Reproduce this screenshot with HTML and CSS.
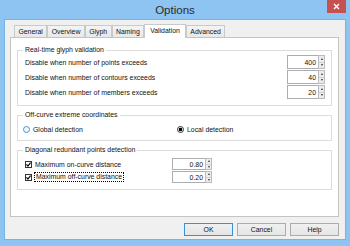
FILE: index.html
```html
<!DOCTYPE html>
<html lang="en">
<head>
  <meta charset="UTF-8">
  <title>Options</title>
  <link rel="stylesheet" href="styles.css">
</head>
<body>
  <div class="window">
    <div class="titlebar">
      <span></span>
      <div class="title">Options</div>
      <div class="close">
        <svg width="7" height="7" viewBox="0 0 7 7"><path d="M1 1L6 6M6 1L1 6" stroke="#fff" stroke-width="1.4"/></svg>
      </div>
    </div>

    <div class="client">
      <div class="tabs">
        <div class="tab">General</div>
        <div class="tab">Overview</div>
        <div class="tab">Glyph</div>
        <div class="tab">Naming</div>
        <div class="tab active">Validation</div>
        <div class="tab">Advanced</div>
      </div>

      <div class="panel">
        <fieldset class="group g-limits">
          <legend>Real-time glyph validation</legend>
          <div class="rows">
            <div class="row">
              <span>Disable when number of points exceeds</span>
              <div class="spin"><div class="spin-field">400</div><div class="spin-arrows"><span class="up"></span><span class="down"></span></div></div>
            </div>
            <div class="row">
              <span>Disable when number of contours exceeds</span>
              <div class="spin"><div class="spin-field">40</div><div class="spin-arrows"><span class="up"></span><span class="down"></span></div></div>
            </div>
            <div class="row">
              <span>Disable when number of members exceeds</span>
              <div class="spin"><div class="spin-field">20</div><div class="spin-arrows"><span class="up"></span><span class="down"></span></div></div>
            </div>
          </div>
        </fieldset>

        <fieldset class="group g-extreme">
          <legend>Off-curve extreme coordinates</legend>
          <div class="radios">
            <label class="radio"><span class="radio-dot hover"></span>Global detection</label>
            <label class="radio"><span class="radio-dot checked"></span>Local detection</label>
          </div>
        </fieldset>

        <fieldset class="group g-diagonal">
          <legend>Diagonal redundant points detection</legend>
          <div class="checks">
            <label class="check-row">
              <span class="check"><svg width="5" height="5" viewBox="0 0 5 5"><path d="M0.4 2.4L1.9 4L4.6 0.6" fill="none" stroke="#000" stroke-width="1.2"/></svg></span>
              <span>Maximum on-curve distance</span>
            </label>
            <div class="spin"><div class="spin-field">0.80</div><div class="spin-arrows"><span class="up"></span><span class="down"></span></div></div>
            <label class="check-row">
              <span class="check"><svg width="5" height="5" viewBox="0 0 5 5"><path d="M0.4 2.4L1.9 4L4.6 0.6" fill="none" stroke="#000" stroke-width="1.2"/></svg></span>
              <span class="focus">Maximum off-curve distance</span>
            </label>
            <div class="spin"><div class="spin-field">0.20</div><div class="spin-arrows"><span class="up"></span><span class="down"></span></div></div>
          </div>
        </fieldset>
      </div>

      <div class="buttons">
        <button class="btn default">OK</button>
        <button class="btn">Cancel</button>
        <button class="btn">Help</button>
      </div>
    </div>
  </div>
</body>
</html>
```

FILE: styles.css
```css
html, body {
  margin: 0;
  padding: 0;
}
body {
  font-family: 'Liberation Sans', Arial, sans-serif;
  font-size: 6.9px;
  color: #111;
}

/* Рамка окна */
.window {
  width: 350px;
  height: 246px;
  box-sizing: border-box;
  padding: 0 4px 6px 4px;
  background: #8ec4f2;
  display: flex;
  flex-direction: column;
}
.titlebar {
  height: 19px;
  display: grid;
  grid-template-columns: 1fr auto 1fr;
  align-items: start;
  flex: none;
}
.title {
  font-size: 11.5px;
  line-height: 20px;
  color: #2b2b2b;
}
.close {
  justify-self: end;
  width: 19px;
  height: 13px;
  background: #c75050;
  display: flex;
  align-items: center;
  justify-content: center;
}
.close svg {
  display: block;
}

.client {
  flex: 1;
  min-height: 0;
  background: #f0f0f0;
  border: 1px solid #7ab3e3;
  padding: 4px 6px 3px 5px;
  display: flex;
  flex-direction: column;
}

/* Вкладки */
.tabs {
  display: flex;
  align-items: flex-end;
  height: 13px;
  padding-left: 4px;
  flex: none;
}
.tab {
  box-sizing: border-box;
  height: 12px;
  line-height: 11px;
  padding: 0 3.4px;
  border: 1px solid #c9c9c9;
  border-bottom: 0;
  background: linear-gradient(#f4f4f4, #e8e8e8);
  white-space: nowrap;
}
.tab.active {
  height: 14px;
  line-height: 12px;
  margin-bottom: -1px;
  padding: 0 5px;
  background: #fff;
  position: relative;
  z-index: 1;
}

.panel {
  flex: 1;
  min-height: 0;
  background: #fff;
  border: 1px solid #c4c4c4;
  padding: 7px 6px 0 6px;
}

/* Группы */
.group {
  margin: 0;
  min-width: 0;
  border: 1px solid #dcdcdc;
  padding: 0 6px 6px 7px;
}
.group + .group {
  margin-top: 4px;
}
.group legend {
  padding: 0 2px;
  margin-left: -2px;
  line-height: 10px;
}
.rows {
  display: flex;
  flex-direction: column;
  gap: 1px;
}
.row {
  height: 14px;
  display: flex;
  align-items: center;
  justify-content: space-between;
}

.spin {
  display: flex;
  height: 100%;
}
.spin-field {
  box-sizing: border-box;
  width: 31px;
  border: 1px solid #abadb3;
  border-right: 0;
  background: #fff;
  padding-right: 2px;
  display: flex;
  align-items: center;
  justify-content: flex-end;
}
.spin-arrows {
  box-sizing: border-box;
  width: 7px;
  border: 1px solid #bcbcbc;
  display: flex;
  flex-direction: column;
}
.spin-arrows span {
  flex: 1;
  background: #ececec;
  display: flex;
  align-items: center;
  justify-content: center;
}
.spin-arrows span + span {
  border-top: 1px solid #d2d2d2;
}
.spin-arrows span:after {
  content: "";
  border-left: 1.5px solid transparent;
  border-right: 1.5px solid transparent;
}
.spin-arrows .up:after {
  border-bottom: 2px solid #333;
}
.spin-arrows .down:after {
  border-top: 2px solid #333;
}

.g-extreme {
  padding-bottom: 4px;
}
.radios {
  display: grid;
  grid-template-columns: 154px 1fr;
  align-items: center;
  height: 13px;
  margin: 3px 0 0 -2px;
}
.radio {
  display: flex;
  align-items: center;
  gap: 3px;
}
.radio-dot {
  box-sizing: border-box;
  width: 7px;
  height: 7px;
  border-radius: 50%;
  border: 1px solid #333;
  background: #fff;
}
.radio-dot.hover {
  border-color: #4a8fd0;
  background: #f2f8fe;
}
.radio-dot.checked {
  background: radial-gradient(circle, #000 1.6px, #fff 2.1px);
}

.checks {
  display: grid;
  grid-template-columns: 147px auto;
  grid-auto-rows: 12px;
  row-gap: 1px;
  justify-content: start;
  margin-top: 3px;
}
.check-row {
  display: flex;
  align-items: center;
  gap: 3px;
}
.check {
  box-sizing: border-box;
  width: 7px;
  height: 7px;
  border: 1px solid #333;
  background: #fff;
  display: flex;
  align-items: center;
  justify-content: center;
}
.check svg {
  display: block;
}
.focus {
  outline: 1px dotted #000;
  padding: 0 1px;
  line-height: 8px;
}
.checks .spin-field {
  width: 33px;
}

/* Кнопки */
.buttons {
  display: flex;
  justify-content: flex-end;
  gap: 4px;
  margin-top: 6px;
  height: 13px;
  flex: none;
}
.btn {
  box-sizing: border-box;
  width: 49px;
  height: 13px;
  margin: 0;
  padding: 0;
  border: 1px solid #acacac;
  background: linear-gradient(#f0f0f0, #e5e5e5);
  font: inherit;
  color: #111;
  line-height: 11px;
  text-align: center;
}
.btn.default {
  border-color: #3c8fd9;
}
```
